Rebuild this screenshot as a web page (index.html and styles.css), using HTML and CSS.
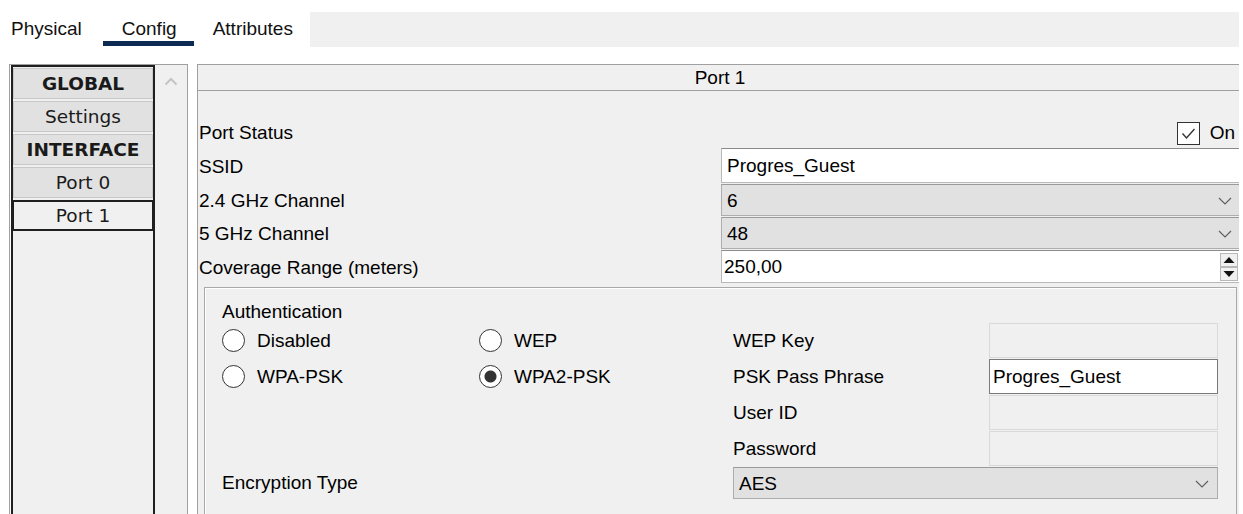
FILE: index.html
```html
<!DOCTYPE html>
<html lang="en">
<head>
<meta charset="utf-8">
<title>Port 1 Config</title>
<link rel="stylesheet" href="styles.css">
</head>
<body>
<div class="tabs">
  <div class="tab">Physical</div>
  <div class="tab active">Config</div>
  <div class="tab">Attributes</div>
  <div class="tab-fill"></div>
</div>

<div class="main">
  <div class="side">
    <div class="nav">
      <div class="nav-item head">GLOBAL</div>
      <div class="nav-item">Settings</div>
      <div class="nav-item head">INTERFACE</div>
      <div class="nav-item">Port 0</div>
      <div class="nav-item selected">Port 1</div>
    </div>
    <div class="vscroll">
      <svg width="14" height="9" viewBox="0 0 14 9"><polyline points="1.5,7.5 7,2 12.5,7.5" fill="none" stroke="#c4c4c4" stroke-width="2"/></svg>
    </div>
  </div>

  <div class="panel">
    <div class="panel-title">Port 1</div>
    <div class="form">
      <div class="label">Port Status</div>
      <div class="status">
        <svg class="check" width="23" height="23" viewBox="0 0 23 23"><rect x="0.5" y="0.5" width="22" height="22" fill="#fff" stroke="#333"/><polyline points="5.5,11.5 9.5,16 17.5,7" fill="none" stroke="#333" stroke-width="1.4"/></svg>
        <span>On</span>
      </div>

      <div class="label">SSID</div>
      <div class="textbox">Progres_Guest</div>

      <div class="label">2.4 GHz Channel</div>
      <div class="select"><span>6</span><svg width="14" height="8" viewBox="0 0 14 8"><polyline points="1,1 7,7 13,1" fill="none" stroke="#606060" stroke-width="1.2"/></svg></div>

      <div class="label">5 GHz Channel</div>
      <div class="select"><span>48</span><svg width="14" height="8" viewBox="0 0 14 8"><polyline points="1,1 7,7 13,1" fill="none" stroke="#606060" stroke-width="1.2"/></svg></div>

      <div class="label">Coverage Range (meters)</div>
      <div class="textbox spin">
        <span>250,00</span>
        <svg width="18" height="28" viewBox="0 0 18 28"><rect x="0.5" y="0.5" width="17" height="13" fill="#f0f0f0" stroke="#b8b8b8"/><rect x="0.5" y="14.5" width="17" height="13" fill="#f0f0f0" stroke="#b8b8b8"/><polygon points="3.5,10 9,4 14.5,10" fill="#111"/><polygon points="3.5,18 14.5,18 9,24" fill="#111"/></svg>
      </div>
    </div>

    <div class="group">
      <div class="group-title">Authentication</div>
      <div class="auth">
        <label class="opt"><span class="radio"></span>Disabled</label>
        <label class="opt"><span class="radio"></span>WEP</label>
        <div class="lbl">WEP Key</div>
        <div class="field"></div>

        <label class="opt"><span class="radio"></span>WPA-PSK</label>
        <label class="opt"><span class="radio checked"></span>WPA2-PSK</label>
        <div class="lbl">PSK Pass Phrase</div>
        <div class="field on">Progres_Guest</div>

        <div class="lbl c3">User ID</div>
        <div class="field"></div>

        <div class="lbl c3">Password</div>
        <div class="field"></div>

        <div class="lbl enc">Encryption Type</div>
        <div class="select aes"><span>AES</span><svg width="14" height="8" viewBox="0 0 14 8"><polyline points="1,1 7,7 13,1" fill="none" stroke="#606060" stroke-width="1.2"/></svg></div>
      </div>
    </div>
  </div>
</div>
</body>
</html>
```

FILE: styles.css
```css
* {
  box-sizing: border-box;
}

html,
body {
  margin: 0;
  padding: 0;
  background: #fff;
  overflow: hidden;
}

body {
  width: 1243px;
  height: 514px;
  font-family: "Liberation Sans", Arial, sans-serif;
  font-size: 19px;
  color: #000;
}

/* ---- top tab strip ---- */
.tabs {
  display: flex;
  width: 1239px;
  height: 35px;
  margin-top: 12px;
}

.tab {
  height: 34px;
  padding: 5px 17px 0 19px;
  border-bottom: 5px solid transparent;
  line-height: 24px;
  color: #111;
  white-space: nowrap;
}

.tab:first-child {
  padding-left: 11px;
  padding-right: 21px;
}

.tab.active {
  border-bottom-color: #0d2b52;
}

.tab-fill {
  flex: 1;
  background: #f0f0f0;
}

/* ---- main area ---- */
.main {
  display: flex;
  width: 1239px;
  height: 470px;
  margin-top: 17px;
  overflow: hidden;
}

/* left navigation list with its scrollbar */
.side {
  display: flex;
  margin-left: 9px;
  padding-left: 1px;
  border: 1px solid #a0a0a0;
  border-bottom: none;
}

.nav {
  width: 144px;
  display: flex;
  flex-direction: column;
  gap: 2px;
  padding-top: 1px;
  border: 2px solid #1f1f1f;
  border-bottom: none;
  background: #f0f0f0;
}

.nav-item {
  height: 31px;
  border: 1px solid #c8c8c8;
  background: #e1e1e1;
  text-align: center;
  line-height: 30px;
  font-family: "DejaVu Sans", Verdana, sans-serif;
  font-size: 18.5px;
  color: #1a1a1a;
}

.nav-item.head {
  font-weight: bold;
}

.nav-item.selected {
  margin: 0 -1px;
  border: 2px solid #1f1f1f;
  background: #f0f0f0;
  line-height: 28px;
}

.vscroll {
  width: 32px;
  background: #f0f0f0;
  display: flex;
  justify-content: center;
  align-items: flex-start;
  padding-top: 12px;
}

/* right settings panel */
.panel {
  flex: 1;
  margin-left: 9px;
  margin-right: -4px;
  border: 1px solid #a0a0a0;
  border-bottom: none;
  background: #f0f0f0;
}

.panel-title {
  height: 26px;
  border-bottom: 1px solid #a0a0a0;
  text-align: center;
  line-height: 25px;
}

.form {
  display: grid;
  grid-template-columns: 522px 1fr;
  grid-template-rows: 31px 35px 32px 32px 33px;
  row-gap: 1px;
  padding: 25px 0 0 1px;
}

.label {
  display: flex;
  align-items: center;
  padding-top: 2px;
  white-space: nowrap;
}

.status {
  display: flex;
  justify-content: flex-end;
  align-items: center;
  gap: 10px;
  padding-top: 3px;
  padding-right: 7px;
}

.textbox {
  display: flex;
  align-items: center;
  padding-left: 5px;
  padding-top: 1px;
  background: #fff;
  border: 1px solid #b9b9b9;
  border-top-color: #8a8a8a;
}

.textbox.spin {
  justify-content: space-between;
  padding-left: 2px;
  padding-right: 3px;
}

.select {
  display: flex;
  align-items: center;
  justify-content: space-between;
  padding: 1px 9px 0 5px;
  background: #e1e1e1;
  border: 1px solid #adadad;
  border-top-color: #9a9a9a;
}

/* authentication group */
.group {
  width: 1033px;
  height: 260px;
  margin: 4px 0 0 6px;
  padding: 13px 0 0 17px;
  border: 1px solid #a9a9a9;
  border-bottom: none;
  box-shadow: inset 1px 1px 0 #fff;
}

.group-title {
  height: 22px;
  line-height: 22px;
}

.auth {
  display: grid;
  grid-template-columns: 257px 254px 256px 229px;
  grid-template-rows: 35px 35px 35px 35px 32px;
  row-gap: 1px;
}

.opt {
  display: flex;
  align-items: center;
  gap: 12px;
}

.radio {
  width: 23px;
  height: 23px;
  border: 1.3px solid #333;
  border-radius: 50%;
  background: #fff;
}

.radio.checked {
  background: radial-gradient(circle, #333 0 5.5px, #fff 6.5px);
}

.lbl {
  display: flex;
  align-items: center;
  white-space: nowrap;
}

.lbl.c3 {
  grid-column: 3;
}

.lbl.enc {
  grid-column: 1 / 3;
}

.field {
  display: flex;
  align-items: center;
  background: #f0f0f0;
  border: 1px solid #d9d9d9;
}

.field.on {
  padding-left: 3px;
  background: #fff;
  border-color: #7a7a7a;
}

.select.aes {
  grid-column: 3 / 5;
  padding-right: 8px;
}
```
